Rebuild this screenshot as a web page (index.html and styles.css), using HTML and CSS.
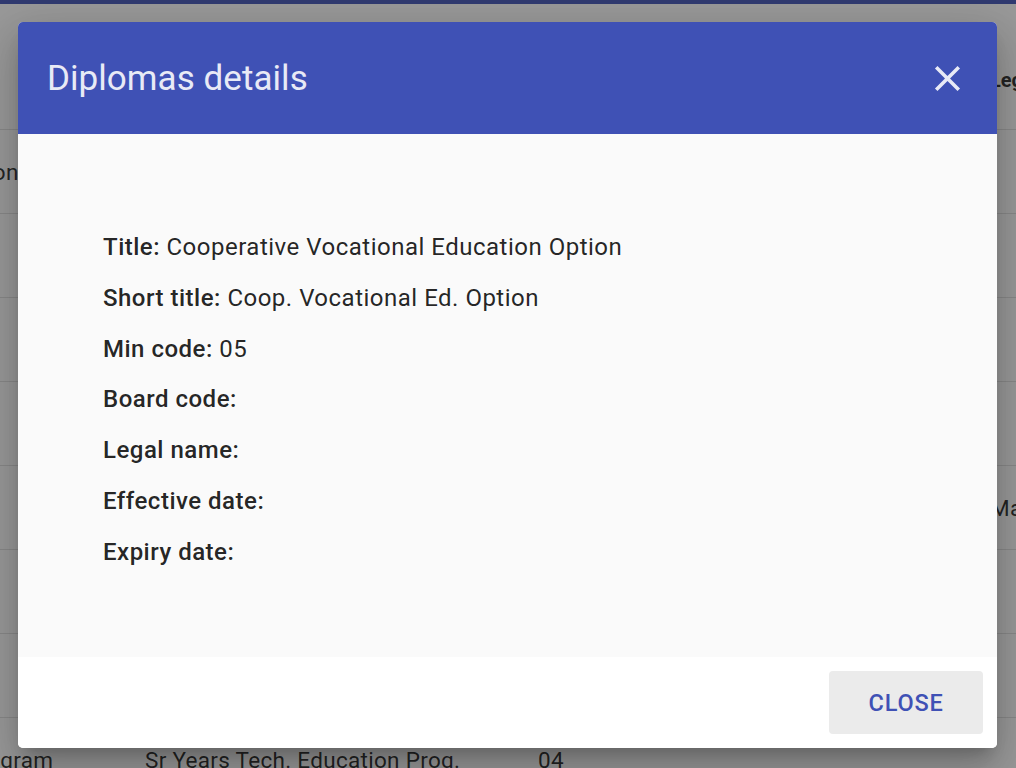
FILE: index.html
```html
<!DOCTYPE html>
<html lang="en">
<head>
<meta charset="utf-8">
<title>Diplomas</title>
<link rel="stylesheet" href="styles.css">
</head>
<body>
<div class="app">
  <div class="topbar"></div>
  <div class="toolbar-space"></div>
  <div class="table-wrap">
    <div class="table">
      <div class="row head">
        <div class="cell">Title</div>
        <div class="cell">Short title</div>
        <div class="cell">Min code</div>
        <div class="cell">Legal name</div>
      </div>
      <div class="row">
        <div class="cell">Cooperative Vocational Education Option</div>
        <div class="cell">Coop. Vocational Ed. Option</div>
        <div class="cell">05</div>
        <div class="cell"></div>
      </div>
      <div class="row">
        <div class="cell">English Program</div>
        <div class="cell">English Program</div>
        <div class="cell">01</div>
        <div class="cell"></div>
      </div>
      <div class="row">
        <div class="cell">French Immersion</div>
        <div class="cell">French Immersion</div>
        <div class="cell">02</div>
        <div class="cell"></div>
      </div>
      <div class="row">
        <div class="cell">Français</div>
        <div class="cell">Français</div>
        <div class="cell">03</div>
        <div class="cell"></div>
      </div>
      <div class="row">
        <div class="cell">Mature Student</div>
        <div class="cell">Mature Student</div>
        <div class="cell">06</div>
        <div class="cell">Manitoba Education</div>
      </div>
      <div class="row">
        <div class="cell">Int. Baccalaureate</div>
        <div class="cell">Int. Baccalaureate</div>
        <div class="cell">07</div>
        <div class="cell"></div>
      </div>
      <div class="row">
        <div class="cell">Adv. Placement</div>
        <div class="cell">Adv. Placement</div>
        <div class="cell">08</div>
        <div class="cell"></div>
      </div>
      <div class="row">
        <div class="cell">Senior Years Technology Education Program</div>
        <div class="cell">Sr Years Tech. Education Prog.</div>
        <div class="cell">04</div>
        <div class="cell"></div>
      </div>
    </div>
  </div>
</div>

<div class="overlay">
  <div class="dialog">
    <div class="dialog-header">
      <h1 class="dialog-title">Diplomas details</h1>
      <svg class="close-icon" viewBox="0 0 24 24" aria-hidden="true"><path d="M19 6.41L17.59 5 12 10.59 6.41 5 5 6.41 10.59 12 5 17.59 6.41 19 12 13.41 17.59 19 19 17.59 13.41 12z"/></svg>
    </div>
    <div class="dialog-body">
      <p class="field"><span class="label">Title:</span> Cooperative Vocational Education Option</p>
      <p class="field"><span class="label">Short title:</span> Coop. Vocational Ed. Option</p>
      <p class="field"><span class="label">Min code:</span> 05</p>
      <p class="field"><span class="label">Board code:</span></p>
      <p class="field"><span class="label">Legal name:</span></p>
      <p class="field"><span class="label">Effective date:</span></p>
      <p class="field"><span class="label">Expiry date:</span></p>
    </div>
    <div class="dialog-footer">
      <button class="btn-close" type="button">Close</button>
    </div>
  </div>
</div>
</body>
</html>
```

FILE: styles.css
```css
html, body {
  margin: 0;
  padding: 0;
  height: 100%;
  overflow: hidden;
}
body {
  font-family: Roboto, "Liberation Sans", Arial, sans-serif;
  background: #ffffff;
  color: rgba(0,0,0,0.87);
}
.app {
  display: flex;
  flex-direction: column;
}
.topbar {
  height: 4px;
  background: #3f51b5;
}
.toolbar-space {
  height: 42px;
}
.table-wrap {
  overflow: hidden;
}
.table {
  margin-left: -402px;
  width: 1540px;
}
.row {
  display: grid;
  grid-template-columns: 547px 393px 452px 1fr;
  height: 84px;
  box-sizing: border-box;
  align-items: center;
  border-bottom: 1px solid #e0e0e0;
  font-size: 22.5px;
  letter-spacing: 0.3px;
}
.row.head {
  font-weight: 700;
  font-size: 20px;
  letter-spacing: 0;
  padding-bottom: 16px;
}
.cell {
  white-space: nowrap;
  overflow: hidden;
}

.overlay {
  position: fixed;
  inset: 0;
  box-sizing: border-box;
  padding: 22px 19px 20px 18px;
  background: rgba(33,33,33,0.46);
  display: flex;
  align-items: flex-start;
  justify-content: flex-start;
}
.dialog {
  width: 979px;
  height: 726px;
  border-radius: 5px;
  overflow: hidden;
  background: #ffffff;
  display: flex;
  flex-direction: column;
  box-shadow: 0 11px 15px -7px rgba(0,0,0,.2), 0 24px 38px 3px rgba(0,0,0,.14), 0 9px 46px 8px rgba(0,0,0,.12);
}
.dialog-header {
  height: 112px;
  flex: none;
  background: #3f51b5;
  display: flex;
  align-items: center;
  justify-content: space-between;
  padding: 0 28px 0 29px;
}
.dialog-title {
  margin: 0;
  font-size: 35px;
  font-weight: 400;
  color: #e8eaf6;
  letter-spacing: 0.05px;
}
.close-icon {
  width: 43px;
  height: 43px;
  fill: #e8eaf6;
}
.dialog-body {
  flex: 1;
  background: #fafafa;
  padding: 96px 85px 0 85px;
  display: flex;
  flex-direction: column;
  gap: 16.8px;
}
.field {
  margin: 0;
  line-height: 34px;
  font-size: 24px;
  letter-spacing: 0.5px;
  color: rgba(0,0,0,0.87);
}
.label {
  font-weight: 500;
}
.dialog-footer {
  height: 91px;
  flex: none;
  box-sizing: border-box;
  padding: 14px;
  display: flex;
  justify-content: flex-end;
  background: #ffffff;
}
.btn-close {
  width: 154px;
  height: 63px;
  border: none;
  border-radius: 4px;
  background: #ebebeb;
  color: #3f51b5;
  font-family: Roboto, "Liberation Sans", Arial, sans-serif;
  font-size: 23.5px;
  font-weight: 500;
  text-transform: uppercase;
  letter-spacing: 0.8px;
  padding: 0;
}
```
